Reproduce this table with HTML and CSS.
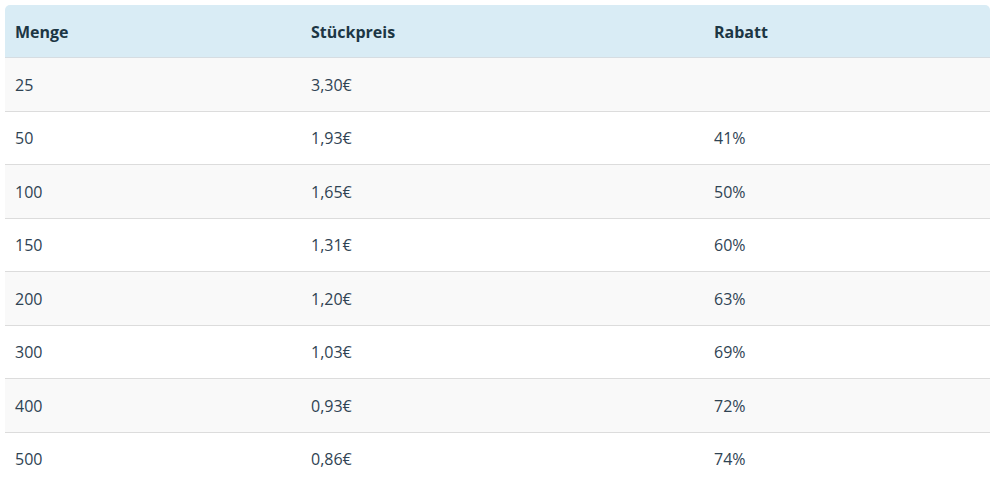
FILE: index.html
```html
<!DOCTYPE html>
<html lang="de">
<head>
<meta charset="utf-8">
<link rel="stylesheet" href="styles.css">
</head>
<body>
<table class="price-table">
  <colgroup>
    <col class="c1"><col class="c2"><col class="c3">
  </colgroup>
  <thead>
    <tr><th>Menge</th><th>Stückpreis</th><th>Rabatt</th></tr>
  </thead>
  <tbody>
    <tr><td>25</td><td>3,30€</td><td></td></tr>
    <tr><td>50</td><td>1,93€</td><td>41%</td></tr>
    <tr><td>100</td><td>1,65€</td><td>50%</td></tr>
    <tr><td>150</td><td>1,31€</td><td>60%</td></tr>
    <tr><td>200</td><td>1,20€</td><td>63%</td></tr>
    <tr><td>300</td><td>1,03€</td><td>69%</td></tr>
    <tr><td>400</td><td>0,93€</td><td>72%</td></tr>
    <tr><td>500</td><td>0,86€</td><td>74%</td></tr>
  </tbody>
</table>
</body>
</html>
```
FILE: styles.css
```css
html, body {
  margin: 0;
  padding: 0;
  background: #ffffff;
}
body {
  padding: 5px 11px 0 5px;
  font-family: "Open Sans", "Noto Sans", sans-serif;
  font-size: 16px;
  color: #2f4353;
}
.price-table {
  width: 985px;
  border-collapse: separate;
  border-spacing: 0;
  table-layout: fixed;
}
.c1 { width: 296px; }
.c2 { width: 403px; }
.c3 { width: 286px; }
.price-table th {
  background: #d9ecf5;
  color: #1c3644;
  font-weight: 700;
  text-align: left;
  padding: 1px 10px 0;
  height: 51px;
  line-height: 22px;
  border-bottom: 1px solid #d6dde2;
}
.price-table th:first-child { border-top-left-radius: 5px; }
.price-table th:last-child { border-top-right-radius: 5px; }
.price-table td {
  padding: 1px 10px 0;
  height: 51.5px;
  line-height: 22px;
  border-bottom: 1px solid #dcdcdc;
}
.price-table tbody tr:nth-child(odd) td { background: #f9f9f9; }
.price-table tbody tr:last-child td { border-bottom: none; }
```
